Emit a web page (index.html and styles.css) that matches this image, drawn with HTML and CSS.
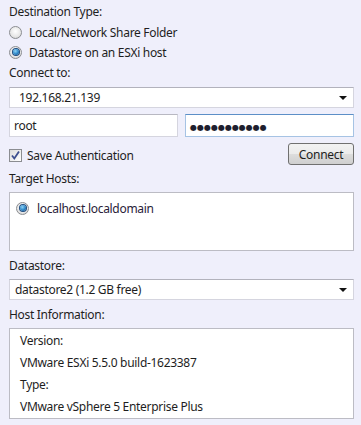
FILE: index.html
```html
<!DOCTYPE html>
<html>
<head>
    <title>Destination</title>
    <link rel="stylesheet" href="styles.css">
</head>
<body>
    <div class="panel">
        <div class="label">Destination Type:</div>
        <div class="option"><span class="radio"></span>Local/Network Share Folder</div>
        <div class="option"><span class="radio checked"></span>Datastore on an ESXi host</div>

        <div class="label gap1">Connect to:</div>
        <div class="select gap4"><span class="value ip">192.168.21.139</span><span class="arrow"></span></div>

        <!-- Credentials -->
        <div class="creds">
            <div class="input">root</div>
            <div class="input focused"><span class="dots">●●●●●●●●●●●</span></div>
        </div>
        <div class="auth-row">
            <div class="check-line"><span class="checkbox"><svg width="11" height="11" viewBox="0 0 11 11"><path d="M2 5.5 L4.3 8.5 L9 1.5" fill="none" stroke="#3d4f8f" stroke-width="1.8"/></svg></span>Save Authentication</div>
            <button class="btn">Connect</button>
        </div>

        <div class="label gap4">Target Hosts:</div>
        <div class="box hosts">
            <div class="option host"><span class="radio checked"></span>localhost.localdomain</div>
        </div>

        <div class="label gap5">Datastore:</div>
        <div class="select gap3"><span class="value">datastore2 (1.2 GB free)</span><span class="arrow"></span></div>

        <div class="label gap5">Host Information:</div>
        <div class="box info">
            <div class="info-row">Version:</div>
            <div class="info-row">VMware ESXi 5.5.0 build-1623387</div>
            <div class="info-row">Type:</div>
            <div class="info-row">VMware vSphere 5 Enterprise Plus</div>
        </div>
    </div>
</body>
</html>
```

FILE: styles.css
```css
body {
    margin: 0;
    background-color: #efeffb;
    font-family: "Noto Sans", "Open Sans", sans-serif;
    font-size: 12px;
    letter-spacing: -0.3px;
    color: #1e1e1e;
}
.panel {
    width: 345px;
    padding: 2px 0 0 9px;
    display: flex;
    flex-direction: column;
}
.label {
    height: 20px;
    line-height: 20px;
}
.gap1 { margin-top: 1px; }
.gap3 { margin-top: 3px; }
.gap4 { margin-top: 4px; }
.gap5 { margin-top: 5px; }
.option {
    height: 20px;
    display: flex;
    align-items: center;
    gap: 7px;
}
.radio {
    width: 11px;
    height: 11px;
    border: 1px solid #8b8d91;
    border-radius: 50%;
    background: radial-gradient(circle at 50% 40%, #ffffff 0%, #e6e6e6 60%, #c9c9c9 100%);
    display: flex;
    align-items: center;
    justify-content: center;
    flex-shrink: 0;
}
.radio.checked::after {
    content: "";
    width: 6px;
    height: 6px;
    border-radius: 50%;
    background: radial-gradient(circle at 40% 35%, #8fd3f5 0%, #2a86c8 55%, #0b3f78 100%);
    box-shadow: 0 0 0 1px #1e4c80;
}
.select {
    height: 21px;
    box-sizing: border-box;
    border: 1px solid #d5d5df;
    border-top-color: #b2b2bc;
    background: white;
    display: flex;
    align-items: center;
    justify-content: space-between;
    padding: 0 6px 0 5px;
}
.select .ip {
    padding-left: 4px;
}
.arrow {
    width: 0;
    height: 0;
    border-left: 4px solid transparent;
    border-right: 4px solid transparent;
    border-top: 4px solid #111111;
}
.creds {
    margin-top: 6px;
    display: flex;
    gap: 7px;
}
.input {
    flex: 1;
    height: 23px;
    box-sizing: border-box;
    border: 1px solid #d5d5df;
    border-top-color: #b8b8c2;
    background: white;
    padding: 0 4px;
    line-height: 21px;
}
.input.focused {
    border-color: #a6c3e4;
    border-top-color: #5c8fc7;
}
.dots {
    font-family: "DejaVu Sans", sans-serif;
    font-size: 8px;
    letter-spacing: 0;
    color: #1e1e2e;
}
.auth-row {
    margin-top: 6px;
    height: 22px;
    display: flex;
    justify-content: space-between;
    align-items: center;
}
.check-line {
    display: flex;
    align-items: center;
    gap: 5px;
    padding-top: 2px;
}
.checkbox {
    width: 11px;
    height: 11px;
    border: 1px solid #8b8d91;
    background: linear-gradient(135deg, #dcdcdc, #ffffff);
    display: flex;
    align-items: center;
    justify-content: center;
}
.btn {
    width: 66px;
    height: 22px;
    font-family: inherit;
    font-size: 12px;
    letter-spacing: -0.3px;
    color: #1e1e1e;
    border: 1px solid #707070;
    border-radius: 3px;
    background: linear-gradient(#f2f2f2 0%, #ebebeb 50%, #dddddd 51%, #cfcfcf 100%);
    padding: 0;
}
.box {
    margin-top: 3px;
    box-sizing: border-box;
    border: 1px solid #bcbcc4;
    background: white;
}
.hosts {
    height: 59px;
    padding: 5px 0 0 6px;
}
.host {
    gap: 8px;
    color: #2a2238;
}
.info {
    height: 91px;
    padding: 1px 0 0 10px;
}
.info-row {
    height: 22px;
    line-height: 22px;
}
```
